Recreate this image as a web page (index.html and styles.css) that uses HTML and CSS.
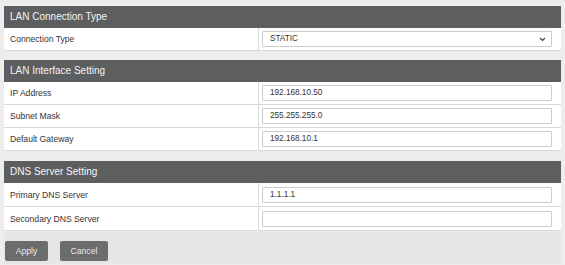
FILE: index.html
```html
<!DOCTYPE html>
<html>
<head>
<meta charset="utf-8">
<link rel="stylesheet" href="styles.css">
</head>
<body>
<div class="page">
  <section class="group">
    <div class="group-head">LAN Connection Type</div>
    <div class="row">
      <div class="label">Connection Type</div>
      <div class="value">
        <div class="select"><span>STATIC</span>
          <svg class="chev" width="7" height="5" viewBox="0 0 7 5"><path d="M1 1 L3.5 3.5 L6 1" fill="none" stroke="#444" stroke-width="1.2"/></svg>
        </div>
      </div>
    </div>
  </section>
  <section class="group">
    <div class="group-head">LAN Interface Setting</div>
    <div class="row">
      <div class="label">IP Address</div>
      <div class="value"><div class="input">192.168.10.50</div></div>
    </div>
    <div class="row">
      <div class="label">Subnet Mask</div>
      <div class="value"><div class="input">255.255.255.0</div></div>
    </div>
    <div class="row">
      <div class="label">Default Gateway</div>
      <div class="value"><div class="input">192.168.10.1</div></div>
    </div>
  </section>
  <section class="group group-dns">
    <div class="group-head">DNS Server Setting</div>
    <div class="row">
      <div class="label">Primary DNS Server</div>
      <div class="value"><div class="input">1.1.1.1</div></div>
    </div>
    <div class="row">
      <div class="label">Secondary DNS Server</div>
      <div class="value"><div class="input"></div></div>
    </div>
  </section>
  <div class="footer">
    <button class="btn btn-apply">Apply</button>
    <button class="btn btn-cancel">Cancel</button>
  </div>
</div>
</body>
</html>
```
FILE: styles.css
```css
html, body {
  margin: 0;
  padding: 0;
  background: #ededed;
  font-family: "Liberation Sans", Arial, sans-serif;
}
.page {
  padding: 6px 4px 0 4px;
  width: 557px;
  display: flex;
  flex-direction: column;
}
.group {
  display: flex;
  flex-direction: column;
  margin-bottom: 9px;
}
.group:nth-child(2) {
  margin-bottom: 10px;
}
.group-dns {
  margin-bottom: 1px;
}
.group-head {
  height: 22px;
  background: #5d5e60;
  color: #f4f4f4;
  font-size: 10px;
  line-height: 22px;
  padding-left: 6px;
}
.row {
  display: flex;
  height: 22px;
  background: #ffffff;
  border-bottom: 1px solid #d9d9d9;
}
.group:nth-child(2) .row:first-of-type {
  height: 23px;
}
.group-dns .row {
  height: 23px;
}
.label {
  width: 248px;
  padding-left: 6px;
  border-right: 1px solid #dcdcdc;
  font-size: 8.6px;
  color: #333;
  display: flex;
  align-items: center;
}
.value {
  flex: 1;
  display: flex;
  align-items: center;
  padding-left: 3px;
}
.input, .select {
  width: 277px;
  height: 14px;
  border: 1px solid #cccccc;
  border-radius: 1px;
  background: #fff;
  font-size: 8.2px;
  color: #333;
  padding: 0 4px 0 7px;
  line-height: 14px;
}
.select {
  display: flex;
  align-items: center;
  justify-content: space-between;
  padding-right: 5px;
  width: 276px;
}
.chev {
  display: block;
}
.footer {
  background: #e6e6e6;
  display: flex;
  gap: 12px;
  padding: 9px 1px 3px 1px;
}
.btn {
  height: 20px;
  border: none;
  border-radius: 2px;
  background: #6b6c6e;
  color: #eaeaea;
  font-family: "Liberation Sans", Arial, sans-serif;
  font-size: 8.6px;
  padding: 0;
}
.btn-apply { width: 43px; }
.btn-cancel { width: 48px; }
```
